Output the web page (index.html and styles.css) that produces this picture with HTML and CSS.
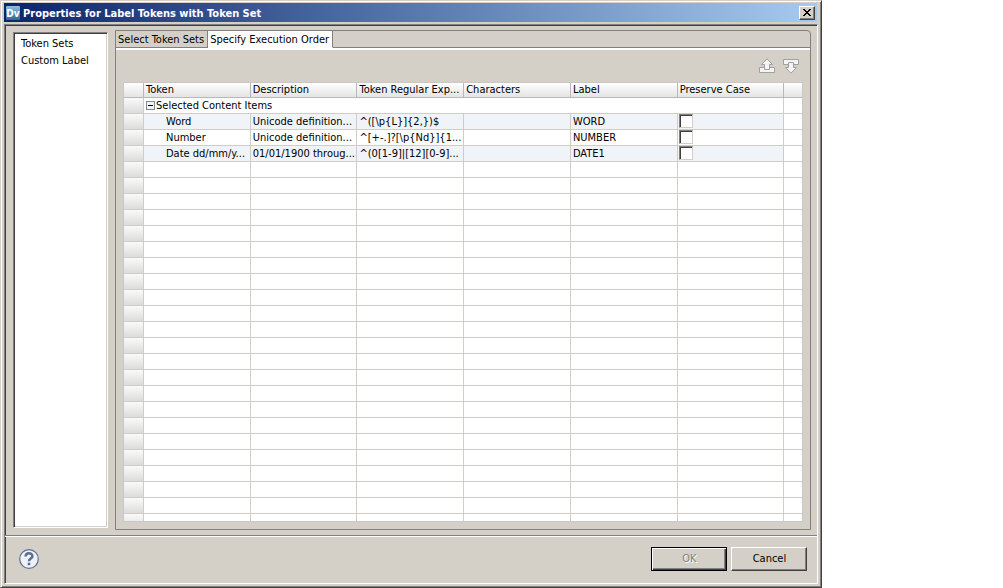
FILE: index.html
```html
<!DOCTYPE html>
<html lang="en">
<head>
    <meta charset="UTF-8">
    <meta name="viewport" content="width=device-width, initial-scale=1.0">
    <title>Properties for Label Tokens with Token Set</title>
    <link rel="stylesheet" href="styles.css">
</head>
<body>
    <div class="dialog">
        <header class="titlebar">
            <svg class="app-icon" viewBox="0 0 14 14" aria-hidden="true">
                <defs>
                    <linearGradient id="app-fill" x1="0" y1="0" x2="0" y2="1">
                        <stop offset="0" stop-color="#8fc0dc"/>
                        <stop offset="1" stop-color="#2c6796"/>
                    </linearGradient>
                </defs>
                <rect width="14" height="14" rx="1" fill="url(#app-fill)"/>
                <text x="7" y="11" text-anchor="middle">Dv</text>
            </svg>
            <h1>Properties for Label Tokens with Token Set</h1>
            <button type="button" class="close" aria-label="Close">
                <svg viewBox="0 0 8 7" shape-rendering="crispEdges" aria-hidden="true">
                    <path d="M0 0h2v1h1v1h2V1h1V0h2v1H7v1H6v1H5v1h1v1h1v1h1v1H6V6H5V5H3v1H2v1H0V6h1V5h1V4h1V3H2V2H1V1H0z"/>
                </svg>
            </button>
        </header>

        <div class="content">
            <main class="main">
                <nav class="sections">
                    <a href="#sets">Token Sets</a>
                    <a href="#custom">Custom Label</a>
                </nav>

                <section class="folder">
                    <div class="tabs" role="tablist">
                        <button type="button" class="tab" role="tab" aria-selected="false">Select Token Sets</button>
                        <button type="button" class="tab active" role="tab" aria-selected="true">Specify Execution Order</button>
                    </div>
                    <div class="panel" role="tabpanel">
                        <div class="toolbar">
                            <button type="button" class="tool" aria-label="Move up">
                                <svg viewBox="0 0 16 16" aria-hidden="true">
                                    <path d="M.5 9.500h15v5H.5z"/>
                                    <path d="M5.500 11.500v-5h-3L8 .8l5.500 5.700h-3v5z"/>
                                </svg>
                            </button>
                            <button type="button" class="tool" aria-label="Move down">
                                <svg viewBox="0 0 16 16" aria-hidden="true">
                                    <path d="M.5 1.500h15v5H.5z"/>
                                    <path d="M5.500 4.500v5h-3L8 15.200l5.500-5.700h-3v-5z"/>
                                </svg>
                            </button>
                        </div>
                        <div class="grid">
                            <table>
                                <colgroup>
                                    <col class="col-handle">
                                    <col span="6">
                                    <col class="col-end">
                                </colgroup>
                                <thead>
                                    <tr>
                                        <th></th>
                                        <th>Token</th>
                                        <th>Description</th>
                                        <th>Token Regular Exp...</th>
                                        <th>Characters</th>
                                        <th>Label</th>
                                        <th>Preserve Case</th>
                                        <th></th>
                                    </tr>
                                </thead>
                                <tbody id="rows">
                                    <tr class="group">
                                        <td class="handle"></td>
                                        <td colspan="6"><button type="button" class="toggle" aria-label="Collapse"></button>Selected Content Items</td>
                                        <td></td>
                                    </tr>
                                    <tr class="shaded">
                                        <td class="handle"></td>
                                        <td class="token">Word</td>
                                        <td>Unicode definition...</td>
                                        <td>^([\p{L}]{2,})$</td>
                                        <td></td>
                                        <td>WORD</td>
                                        <td class="check"><input type="checkbox" aria-label="Preserve case for Word"></td>
                                        <td></td>
                                    </tr>
                                    <tr>
                                        <td class="handle"></td>
                                        <td class="token">Number</td>
                                        <td>Unicode definition...</td>
                                        <td>^[+-.]?[\p{Nd}]{1...</td>
                                        <td></td>
                                        <td>NUMBER</td>
                                        <td class="check"><input type="checkbox" aria-label="Preserve case for Number"></td>
                                        <td></td>
                                    </tr>
                                    <tr class="shaded">
                                        <td class="handle"></td>
                                        <td class="token">Date dd/mm/y...</td>
                                        <td>01/01/1900 throug...</td>
                                        <td>^(0[1-9]|[12][0-9]...</td>
                                        <td></td>
                                        <td>DATE1</td>
                                        <td class="check"><input type="checkbox" aria-label="Preserve case for Date"></td>
                                        <td></td>
                                    </tr>
                                </tbody>
                            </table>
                        </div>
                    </div>
                </section>
            </main>

            <footer class="footer">
                <button type="button" class="help" aria-label="Help">
                    <svg viewBox="0 0 20 20" aria-hidden="true">
                        <circle cx="10" cy="10" r="9.300"/>
                        <path d="M6.600 7.600C6.600 3.200 13.400 3.300 13.400 7.200 13.400 9.600 10 9.500 10 12.200"/>
                        <rect x="8.700" y="13.700" width="2.600" height="2.500"/>
                    </svg>
                </button>
                <button type="button" class="btn default" disabled>OK</button>
                <button type="button" class="btn">Cancel</button>
            </footer>
        </div>
    </div>

    <script>
        // fill the rest of the grid with empty rows
        const rows = document.getElementById('rows');
        const gridHeight = document.querySelector('.grid').clientHeight;
        const table = document.querySelector('table');
        while (table.offsetHeight < gridHeight) {
            const row = rows.insertRow();
            for (let i = 0; i < 8; i++) {
                row.insertCell();
            }
            row.cells[0].className = 'handle';
        }
    </script>
</body>
</html>
```
FILE: styles.css
```css
* {
    box-sizing: border-box;
}
body {
    margin: 0;
    background-color: #fff;
    font-family: "DejaVu Sans Condensed", Tahoma, sans-serif;
    font-size: 11px;
    line-height: 15px;
    color: #000;
}
button {
    padding: 0;
    border: 0;
    background: none;
    font: inherit;
    color: inherit;
}
svg {
    display: block;
}

/* window */
.dialog {
    display: flex;
    flex-direction: column;
    width: 82%;
    height: 100vh;
    padding: 2px 1px 1px 2px;
    border: 1px solid #d4d0c8;
    border-right-color: #404040;
    border-bottom-color: #404040;
    background-color: #d4d0c8;
    box-shadow: inset 1px 1px #fff, inset -1px -1px #808080;
}
.titlebar {
    display: flex;
    align-items: center;
    gap: 3px;
    height: 19px;
    margin: 0 3px 2px 1px;
    padding: 0 2px;
    background: linear-gradient(to right, #0a246a, #a6caf0);
    color: #fff;
}
.titlebar h1 {
    flex: 1;
    margin: 0;
    padding-top: 1px;
    font-size: 11px;
    font-weight: bold;
}
.app-icon {
    width: 14px;
    height: 14px;
}
.app-icon text {
    font-size: 10px;
    font-weight: bold;
    fill: #fff;
}
.close {
    display: flex;
    align-items: center;
    justify-content: center;
    width: 16px;
    height: 14px;
    background-color: #d4d0c8;
    border: 1px solid #fff;
    border-right-color: #404040;
    border-bottom-color: #404040;
    box-shadow: inset -1px -1px #808080;
}
.close svg {
    width: 8px;
    height: 7px;
}
.content {
    flex: 1;
    display: flex;
    flex-direction: column;
    min-height: 0;
    margin: 0 2px 2px 1px;
    border: 1px solid #808080;
    border-right-color: #fff;
    border-bottom-color: #fff;
    box-shadow: inset 1px 1px #404040;
}
.main {
    flex: 1;
    display: flex;
    gap: 7px;
    min-height: 0;
    padding: 5px 6px 5px 8px;
}

/* left list */
.sections {
    width: 95px;
    margin: 2px 0;
    padding: 2px 7px;
    background-color: #fff;
    border: 1px solid #808080;
    border-right-color: #fff;
    border-bottom-color: #fff;
    box-shadow: inset 1px 1px #404040, inset -1px -1px #d4d0c8;
}
.sections a {
    display: block;
    line-height: 17px;
    color: #000;
    text-decoration: none;
}

/* tab folder */
.folder {
    flex: 1;
    display: flex;
    flex-direction: column;
    min-width: 0;
    border: 1px solid #808080;
    border-top-right-radius: 4px;
}
.tabs {
    display: flex;
    height: 19px;
    border-bottom: 2px solid #fff;
    box-shadow: inset 0 -1px #808080;
}
.tab {
    height: 17px;
    padding: 1px 3px 0 2px;
    border-right: 1px solid #808080;
    border-bottom: 1px solid #808080;
}
.tab.active {
    background-color: #fff;
    border-bottom-color: #fff;
}
.panel {
    flex: 1;
    display: flex;
    flex-direction: column;
    min-height: 0;
    padding: 8px 7px 7px;
}
.toolbar {
    display: flex;
    justify-content: flex-end;
    gap: 8px;
    height: 24px;
    padding-right: 4px;
}
.tool {
    width: 16px;
    height: 16px;
}
.tool path {
    fill: #f4f4f4;
    stroke: #a0a0a0;
}

/* grid */
.grid {
    flex: 1;
    min-height: 0;
    overflow: hidden;
    background-color: #fff;
    border: 1px solid #c8c8c8;
}
table {
    width: 100%;
    table-layout: fixed;
    border-collapse: separate;
    border-spacing: 0;
}
.col-handle {
    width: 20px;
}
.col-end {
    width: 18px;
}
th,
td {
    height: 16px;
    padding: 0 0 0 2px;
    border-right: 1px solid #d0cdc6;
    border-bottom: 1px solid #d0cdc6;
    line-height: 15px;
    font-weight: normal;
    text-align: left;
    white-space: nowrap;
}
th {
    height: 15px;
    line-height: 14px;
    border-color: #b8b8b8;
    background: linear-gradient(#fff, #e4e4e4);
}
th:last-child,
td:last-child {
    border-right: 0;
}
.handle {
    background: linear-gradient(#fafafa, #dcdcdc);
}
.shaded td:not(.handle):not(:last-child) {
    background-color: #f0f3f8;
}
.token {
    padding-left: 22px;
}
.toggle {
    width: 9px;
    height: 9px;
    margin-right: 1px;
    border: 1px solid #808890;
    background: linear-gradient(#000, #000) center / 5px 1px no-repeat #f0f3f8;
}
.check {
    padding: 0 0 0 1px;
    vertical-align: top;
}
.check input {
    display: block;
    appearance: none;
    width: 14px;
    height: 14px;
    margin: 0;
    background-color: #fff;
    border: 1px solid #808080;
    border-right-color: #d4d0c8;
    border-bottom-color: #d4d0c8;
    box-shadow: inset 1px 1px #404040;
}

/* bottom bar */
.footer {
    display: flex;
    align-items: center;
    gap: 4px;
    height: 48px;
    padding: 0 10px 2px 14px;
    border-top: 1px solid #808080;
    box-shadow: inset 0 1px #fff;
}
.help {
    width: 20px;
    height: 20px;
    margin-right: auto;
}
.help circle {
    fill: #eef1f6;
    stroke: #5d6f90;
    stroke-width: 1.2;
}
.help path {
    fill: none;
    stroke: #5d6f90;
    stroke-width: 2.6;
}
.help rect {
    fill: #5d6f90;
}
.btn {
    width: 76px;
    height: 24px;
    border: 1px solid #fff;
    border-right-color: #404040;
    border-bottom-color: #404040;
    box-shadow: inset -1px -1px #808080;
}
.btn.default {
    border-color: #000;
    box-shadow: inset 1px 1px #fff, inset -1px -1px #404040, inset -2px -2px #808080;
}
.btn:disabled {
    color: #808080;
    text-shadow: 1px 1px #fff;
}
```
